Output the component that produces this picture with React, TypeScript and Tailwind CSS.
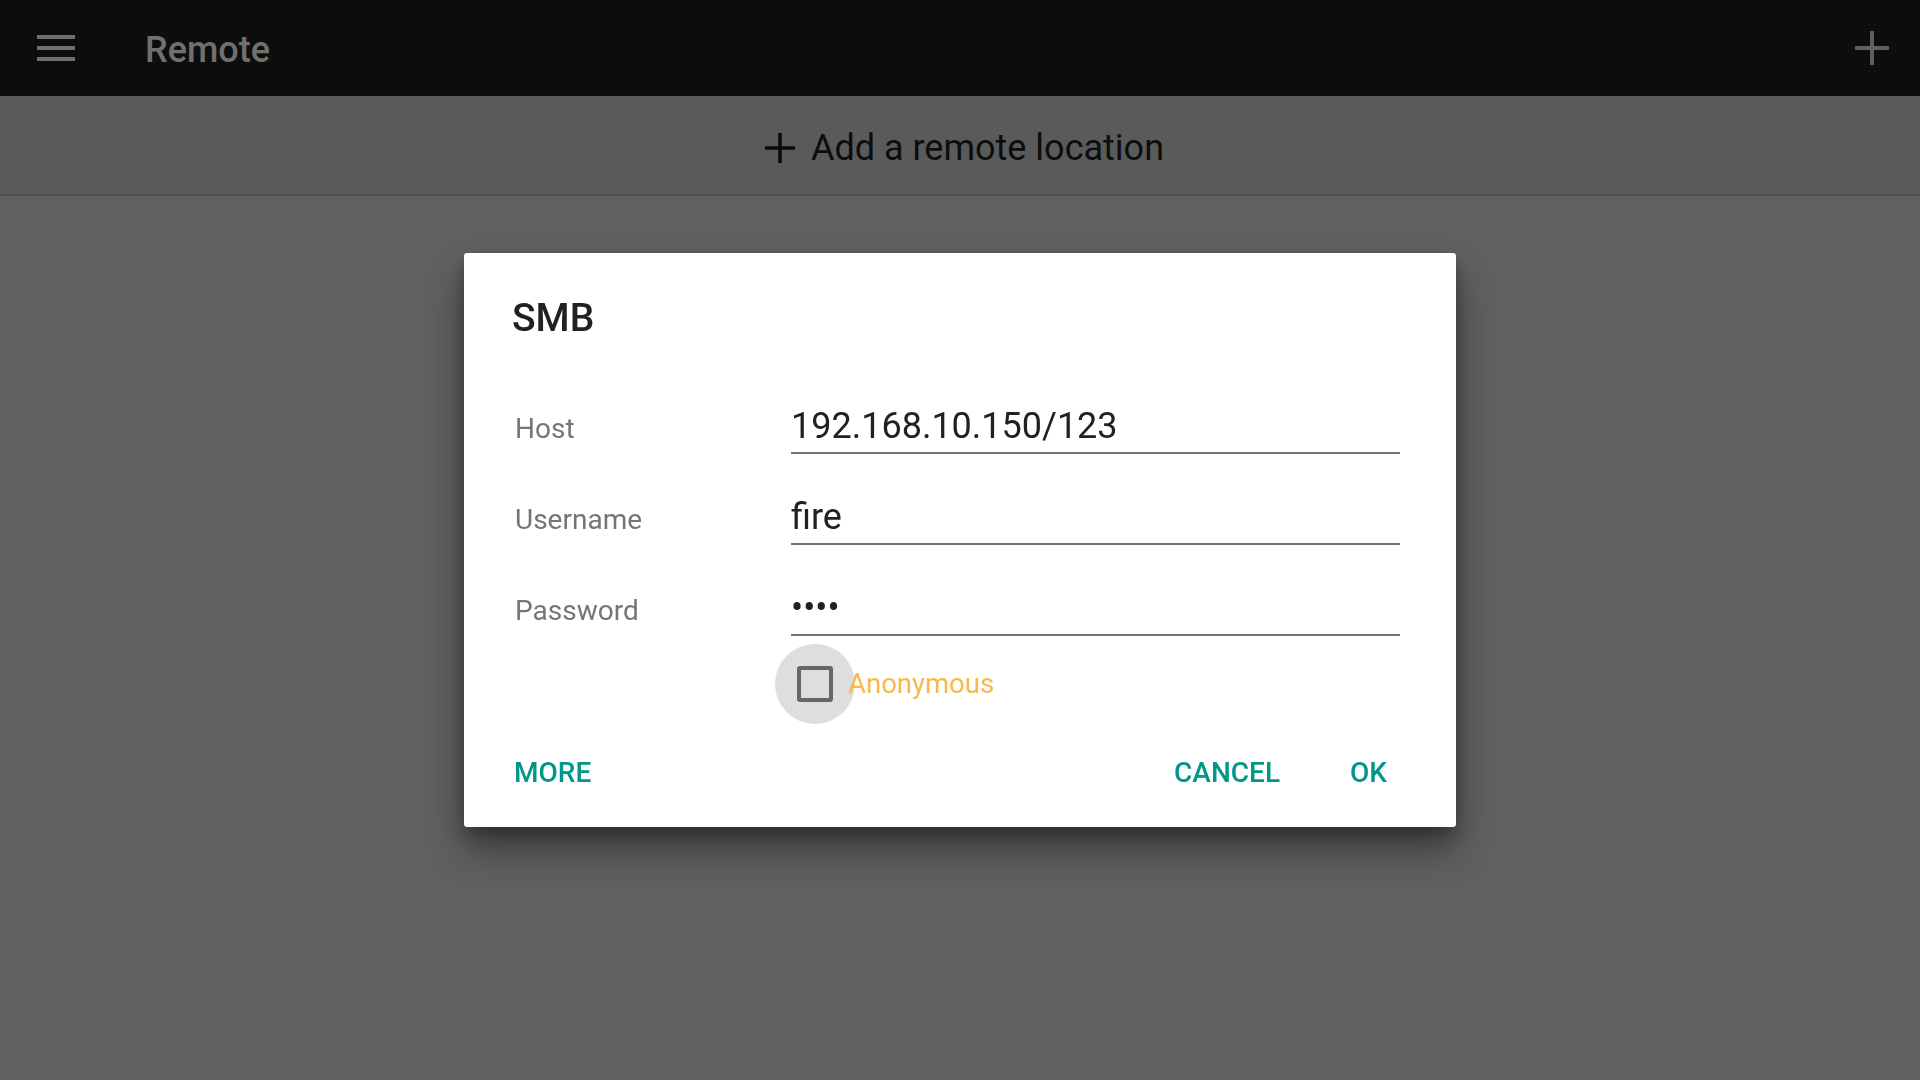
const font = "font-['Roboto','Liberation_Sans',sans-serif]";

function PlusIcon({ size, stroke, color }: { size: number; stroke: number; color: string }) {
  return (
    <svg width={size} height={size} viewBox={`0 0 ${size} ${size}`}>
      <rect x={(size - stroke) / 2} y={0} width={stroke} height={size} fill={color} />
      <rect x={0} y={(size - stroke) / 2} width={size} height={stroke} fill={color} />
    </svg>
  );
}

type Field = { label: string; value: string };

const fields: Field[] = [
  { label: "Host", value: "192.168.10.150/123" },
  { label: "Username", value: "fire" },
  { label: "Password", value: "••••" },
];

function FieldRow({ label, value, first }: Field & { first?: boolean }) {
  return (
    <div className={`flex items-baseline ${first ? "mt-[70px]" : "mt-[45px]"}`}>
      <div className="w-[279px] shrink-0 pl-[3px] text-[28px] leading-none text-[#757575]">{label}</div>
      <div className="w-[609px] shrink-0 border-b-2 border-[#757575] pb-[8px]">
        <div className="whitespace-nowrap text-[36px] leading-none text-[#212121]">{value}</div>
      </div>
    </div>
  );
}

export default function App() {
  return (
    <div className={`relative h-[1080px] w-[1920px] overflow-hidden bg-[#616161] ${font}`}>
      <header className="flex h-[96px] items-center bg-[#0d0d0d]">
        <div className="ml-[37px] flex w-[38px] flex-col gap-[7.5px]">
          <span className="h-[3.5px] bg-[#6e6e6e]" />
          <span className="h-[3.5px] bg-[#6e6e6e]" />
          <span className="h-[3.5px] bg-[#6e6e6e]" />
        </div>
        <h1 className="ml-[70px] pt-[3px] text-[36px] font-medium leading-none text-[#707070]">Remote</h1>
        <div className="ml-auto mr-[31px] flex">
          <PlusIcon size={34} stroke={4} color="#5f5f5f" />
        </div>
      </header>

      <div className="flex h-[100px] items-center justify-center border-b-2 border-[#4f4f4f] bg-[#5a5a5a] pl-[9px] pt-[5px]">
        <PlusIcon size={30} stroke={3.5} color="#0a0a0a" />
        <span className="ml-[16px] text-[36px] leading-none text-[#0d0d0d]">Add a remote location</span>
      </div>

      <div className="fixed inset-0 flex items-center justify-center">
        <div className="w-[992px] rounded-[3px] bg-white pl-[48px] pt-[46px] pb-[40px] shadow-[0_22px_40px_rgba(0,0,0,0.42),0_8px_16px_rgba(0,0,0,0.25)]">
          <h2 className="text-[39px] font-medium leading-none text-[#212121]">SMB</h2>

          {fields.map((f, i) => (
            <FieldRow key={f.label} label={f.label} value={f.value} first={i === 0} />
          ))}

          <div className="mt-[8px] flex h-[80px] items-center">
            <div className="ml-[263px] flex h-[80px] w-[80px] items-center justify-center rounded-full bg-[#dedede]">
              <div className="h-[36px] w-[36px] rounded-[3px] border-[4px] border-[#666666]" />
            </div>
            <span className="-ml-[7px] text-[27.5px] leading-none text-[#f9b94a]">Anonymous</span>
          </div>

          <div className="mt-[35px] flex items-center pl-[2px] pr-[69px] text-[28px] font-medium leading-none text-[#009688]">
            <button className="leading-none">MORE</button>
            <button className="ml-auto leading-none">CANCEL</button>
            <button className="ml-[70px] leading-none">OK</button>
          </div>
        </div>
      </div>
    </div>
  );
}
